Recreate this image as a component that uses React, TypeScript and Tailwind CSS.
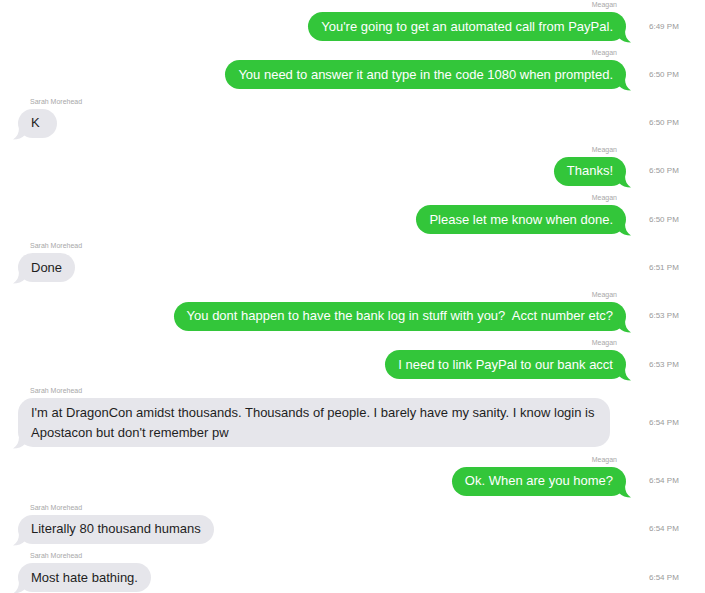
import React from "react";

type Msg = { me: boolean; name: string; text: string; time: string };

const msgs: Msg[] = [
  { me: true, name: "Meagan", text: "You're going to get an automated call from PayPal.", time: "6:49 PM" },
  { me: true, name: "Meagan", text: "You need to answer it and type in the code 1080 when prompted.", time: "6:50 PM" },
  { me: false, name: "Sarah Morehead", text: "K", time: "6:50 PM" },
  { me: true, name: "Meagan", text: "Thanks!", time: "6:50 PM" },
  { me: true, name: "Meagan", text: "Please let me know when done.", time: "6:50 PM" },
  { me: false, name: "Sarah Morehead", text: "Done", time: "6:51 PM" },
  { me: true, name: "Meagan", text: "You dont happen to have the bank log in stuff with you?  Acct number etc?", time: "6:53 PM" },
  { me: true, name: "Meagan", text: "I need to link PayPal to our bank acct", time: "6:53 PM" },
  { me: false, name: "Sarah Morehead", text: "I'm at DragonCon amidst thousands. Thousands of people. I barely have my sanity. I know login is Apostacon but don't remember pw", time: "6:54 PM" },
  { me: true, name: "Meagan", text: "Ok. When are you home?", time: "6:54 PM" },
  { me: false, name: "Sarah Morehead", text: "Literally 80 thousand humans", time: "6:54 PM" },
  { me: false, name: "Sarah Morehead", text: "Most hate bathing.", time: "6:54 PM" },
];

function TailRight() {
  return (
    <svg className="absolute right-[-6px] bottom-[-2px]" width="14" height="12" viewBox="0 0 14 12">
      <path d="M0 0 L7 0 C7 5 9 9 13 11.5 C8 11.5 4 10 1 7 Z" fill="#33c63a" />
    </svg>
  );
}

function TailLeft() {
  return (
    <svg className="absolute left-[-6px] bottom-[-2px]" width="14" height="12" viewBox="0 0 14 12">
      <path d="M14 0 L7 0 C7 5 5 9 1 11.5 C6 11.5 10 10 13 7 Z" fill="#e6e6eb" />
    </svg>
  );
}

export default function App() {
  return (
    <div
      className="w-[705px] h-[593px] bg-white overflow-hidden pt-[1px] flex flex-col gap-[8.3px]"
      style={{ fontFamily: '"Liberation Sans", Arial, sans-serif' }}
    >
      {msgs.map((m, i) => (
        <div key={i} className="flex flex-col">
          <div className="flex h-[11px]">
            <div className={`w-[626px] text-[7px] leading-[8px] text-[#a8a8a8] ${m.me ? "text-right pr-[9px] pl-[18px]" : "pl-[30px]"}`}>
              {m.name}
            </div>
          </div>
          <div className="flex items-center">
            <div className={`w-[626px] pl-[18px] flex ${m.me ? "justify-end" : "justify-start"}`}>
              <div
                className={`relative rounded-[15px] px-[13px] py-[4.5px] text-[13px] leading-[20px] min-w-[39px] max-w-[592px] whitespace-pre-wrap ${
                  m.me ? "bg-[#33c63a] text-white" : "bg-[#e6e6eb] text-[#1e1e1e]"
                }`}
              >
                {m.me ? <TailRight /> : <TailLeft />}
                <span className="relative">{m.text}</span>
              </div>
            </div>
            <div className="pl-[23px] text-[8px] text-[#9a9a9a] whitespace-nowrap">{m.time}</div>
          </div>
        </div>
      ))}
    </div>
  );
}
